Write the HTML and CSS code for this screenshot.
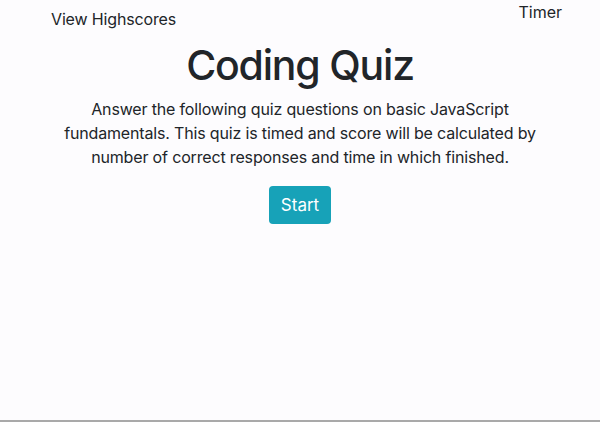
FILE: index.html
```html
<!DOCTYPE html>
<html>
<head>
<meta charset="utf-8">
<link rel="stylesheet" href="styles.css">
</head>
<body>
<div class="page">
  <header class="topbar">
    <a class="highscores">View Highscores</a>
    <div class="timer">Timer</div>
  </header>
  <main class="intro">
    <h1 class="title">Coding Quiz</h1>
    <p class="lead">Answer the following quiz questions on basic JavaScript fundamentals. This quiz is timed and score will be calculated by number of correct responses and time in which finished.</p>
    <button class="start">Start</button>
  </main>
</div>
</body>
</html>
```
FILE: styles.css
```css
html, body {
  margin: 0;
  padding: 0;
  height: 100%;
}
body {
  background: #fdfcfe;
  color: #212529;
  font-family: Inter, "Liberation Sans", Arial, sans-serif;
  font-size: 16px;
}
.page {
  height: 420px;
  border-bottom: 2px solid #a9a9a9;
  display: flex;
  flex-direction: column;
}
.topbar {
  display: flex;
  justify-content: space-between;
  align-items: flex-start;
  padding: 0 38px 0 51px;
}
.highscores {
  margin-top: 9px;
  font-size: 16px;
  line-height: 20px;
  letter-spacing: -0.15px;
  color: #212529;
}
.timer {
  margin-top: 2px;
  font-size: 16px;
  line-height: 20px;
}
.intro {
  display: flex;
  flex-direction: column;
  align-items: center;
  text-align: center;
  padding: 0 50px;
}
.title {
  margin: 10px 0 0;
  font-size: 41px;
  font-weight: 500;
  line-height: 52px;
  letter-spacing: -1.2px;
}
.lead {
  margin: 6px 0 0;
  font-size: 16px;
  line-height: 24px;
  letter-spacing: -0.16px;
}
.start {
  margin-top: 17px;
  background: #17a2b8;
  color: #fff;
  border: none;
  border-radius: 4px;
  font-family: inherit;
  font-size: 17px;
  width: 62px;
  height: 38px;
  padding: 0;
}
```
